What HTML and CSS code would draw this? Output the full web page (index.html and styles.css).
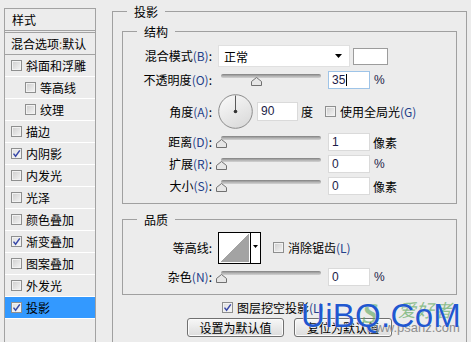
FILE: index.html
```html
<!DOCTYPE html>
<html lang="zh-CN">
<head>
<meta charset="utf-8">
<title>图层样式 - 投影</title>
<link rel="stylesheet" href="styles.css">
</head>
<body>
<div class="app">
  <aside class="styles">
    <div class="styles-head">样式</div>
    <div class="blend">混合选项<span class="colon">:</span>默认</div>
    <ul class="list">
      <li class="item"><span class="cb"></span>斜面和浮雕</li>
      <li class="item sub"><span class="cb"></span>等高线</li>
      <li class="item sub"><span class="cb"></span>纹理</li>
      <li class="item"><span class="cb"></span>描边</li>
      <li class="item"><span class="cb on"><svg viewBox="0 0 9 9" width="9" height="9"><path d="M1.5 4.6 L3.6 7.2 L7.8 1.4" fill="none" stroke="#3848a8" stroke-width="1.5"/></svg></span>内阴影</li>
      <li class="item"><span class="cb"></span>内发光</li>
      <li class="item"><span class="cb"></span>光泽</li>
      <li class="item"><span class="cb"></span>颜色叠加</li>
      <li class="item"><span class="cb on"><svg viewBox="0 0 9 9" width="9" height="9"><path d="M1.5 4.6 L3.6 7.2 L7.8 1.4" fill="none" stroke="#3848a8" stroke-width="1.5"/></svg></span>渐变叠加</li>
      <li class="item"><span class="cb"></span>图案叠加</li>
      <li class="item"><span class="cb"></span>外发光</li>
      <li class="item sel"><span class="cb on"><svg viewBox="0 0 9 9" width="9" height="9"><path d="M1.5 4.6 L3.6 7.2 L7.8 1.4" fill="none" stroke="#3848a8" stroke-width="1.5"/></svg></span>投影</li>
    </ul>
  </aside>

  <fieldset class="group outer">
    <legend>投影</legend>

    <fieldset class="group inner struct">
      <legend>结构</legend>

      <div class="row r1">
        <span class="lbl">混合模式<span class="k">(B)</span>:</span>
        <div class="ctl">
          <div class="select">正常<svg class="arrow" viewBox="0 0 7 4" width="7" height="4"><path d="M0 0 H7 L3.5 4 Z" fill="#000"/></svg></div>
          <div class="swatch"></div>
        </div>
      </div>

      <div class="row r2">
        <span class="lbl">不透明度<span class="k">(O)</span>:</span>
        <div class="ctl">
          <div class="slider"><div class="track"></div><svg class="thumb" style="left:35%" viewBox="0 0 11 9" width="11" height="9"><path d="M5.5 0.5 L10.5 4.5 V8.5 H0.5 V4.5 Z" fill="#e6e6e6" stroke="#707070"/></svg></div>
          <div class="num focus">35<span class="caret"></span></div>
          <span class="unit pct">%</span>
        </div>
      </div>

      <div class="row r3">
        <span class="lbl">角度<span class="k">(A)</span>:</span>
        <div class="ctl">
          <svg class="dial" viewBox="0 0 35 35" width="35" height="35">
            <defs><linearGradient id="dg" x1="0" y1="0" x2="0.6" y2="1"><stop offset="0" stop-color="#fbfbfb"/><stop offset="1" stop-color="#dcdcdc"/></linearGradient></defs>
            <circle cx="17.5" cy="17.5" r="16.8" fill="url(#dg)" stroke="#8c8c8c"/>
            <line x1="17.5" y1="1.5" x2="17.5" y2="17.5" stroke="#5a5a5a" stroke-width="1"/>
            <circle cx="17.5" cy="17.5" r="1.8" fill="#333"/>
          </svg>
          <div class="num angle">90</div>
          <span class="unit deg">度</span>
          <span class="cb gl"></span>
          <span class="cbtext">使用全局光<span class="k">(G)</span></span>
        </div>
      </div>

      <div class="row r4">
        <span class="lbl">距离<span class="k">(D)</span>:</span>
        <div class="ctl">
          <div class="slider"><div class="track"></div><svg class="thumb" style="left:0.4%" viewBox="0 0 11 9" width="11" height="9"><path d="M5.5 0.5 L10.5 4.5 V8.5 H0.5 V4.5 Z" fill="#e6e6e6" stroke="#707070"/></svg></div>
          <div class="num">1</div>
          <span class="unit">像素</span>
        </div>
      </div>

      <div class="row r4">
        <span class="lbl">扩展<span class="k">(R)</span>:</span>
        <div class="ctl">
          <div class="slider"><div class="track"></div><svg class="thumb" style="left:0%" viewBox="0 0 11 9" width="11" height="9"><path d="M5.5 0.5 L10.5 4.5 V8.5 H0.5 V4.5 Z" fill="#e6e6e6" stroke="#707070"/></svg></div>
          <div class="num">0</div>
          <span class="unit pct">%</span>
        </div>
      </div>

      <div class="row r4">
        <span class="lbl">大小<span class="k">(S)</span>:</span>
        <div class="ctl">
          <div class="slider"><div class="track"></div><svg class="thumb" style="left:0%" viewBox="0 0 11 9" width="11" height="9"><path d="M5.5 0.5 L10.5 4.5 V8.5 H0.5 V4.5 Z" fill="#e6e6e6" stroke="#707070"/></svg></div>
          <div class="num">0</div>
          <span class="unit">像素</span>
        </div>
      </div>
    </fieldset>

    <fieldset class="group inner quality">
      <legend>品质</legend>

      <div class="row q1">
        <span class="lbl">等高线:</span>
        <div class="ctl">
          <div class="contour">
            <div class="curve"></div>
            <div class="drop"><svg viewBox="0 0 5 3" width="5" height="3"><path d="M0 0 H5 L2.5 3 Z" fill="#000"/></svg></div>
          </div>
          <span class="cb aa"></span>
          <span class="cbtext">消除锯齿<span class="k">(L)</span></span>
        </div>
      </div>

      <div class="row q2">
        <span class="lbl">杂色<span class="k">(N)</span>:</span>
        <div class="ctl">
          <div class="slider"><div class="track"></div><svg class="thumb" style="left:0%" viewBox="0 0 11 9" width="11" height="9"><path d="M5.5 0.5 L10.5 4.5 V8.5 H0.5 V4.5 Z" fill="#e6e6e6" stroke="#707070"/></svg></div>
          <div class="num">0</div>
          <span class="unit pct">%</span>
        </div>
      </div>
    </fieldset>

    <div class="knock">
      <span class="cb on"><svg viewBox="0 0 9 9" width="9" height="9"><path d="M1.5 4.6 L3.6 7.2 L7.8 1.4" fill="none" stroke="#3848a8" stroke-width="1.5"/></svg></span>
      <span class="cbtext">图层挖空投影<span class="k">(L)</span></span>
    </div>

    <div class="buttons">
      <button class="btn b1">设置为默认值</button>
      <button class="btn b2">复位为默认值</button>
    </div>
  </fieldset>

  <div class="wm-green">爱好者</div>
  <div class="wm-s">S</div>
  <div class="wm-url">www.psahz.com</div>
  <div class="wm-blue">UiBQ.CoM</div>
</div>
</body>
</html>
```

FILE: styles.css
```css
html, body {
  margin: 0;
  padding: 0;
}

body {
  width: 471px;
  height: 342px;
  overflow: hidden;
  background: #ececec;
  font-family: "Noto Sans CJK SC", "Noto Sans", sans-serif;
  font-size: 12px;
  color: #000;
}

.app {
  position: relative;
  display: flex;
  align-items: flex-start;
  height: 342px;
}

/* ---------- left list ---------- */
.styles {
  flex: none;
  box-sizing: border-box;
  width: 92px;
  height: 380px;
  margin: 8px 0 0 4px;
  border: 1px solid #a2a2a2;
}

.styles-head {
  height: 21px;
  line-height: 21px;
  padding-left: 7px;
  border-bottom: 3px double #a2a2a2;
}

.blend {
  height: 21px;
  line-height: 21px;
  padding-left: 6px;
  border-bottom: 1px solid #a2a2a2;
  white-space: nowrap;
}

.colon {
  color: #9a6a20;
}

.list {
  list-style: none;
  margin: 0;
  padding: 0;
}

.item {
  display: flex;
  align-items: center;
  gap: 4px;
  height: 21px;
  padding-left: 6px;
  border-bottom: 1px solid #fff;
  white-space: nowrap;
}

.item.sub {
  padding-left: 20px;
}

.item.sel {
  background: #3399ff;
}

/* checkbox */
.cb {
  flex: none;
  display: inline-flex;
  align-items: center;
  justify-content: center;
  box-sizing: border-box;
  width: 11px;
  height: 11px;
  border: 1px solid #8e8f8f;
  background: linear-gradient(135deg, #cdcdcd, #f5f5f5);
  box-shadow: inset 0 0 0 1px #f2f2f2;
}

.cb.on {
  background: linear-gradient(135deg, #dedede, #fafafa);
}

.cb svg {
  display: block;
}

.cbtext {
  white-space: nowrap;
}

.k {
  color: #23408a;
}

/* ---------- right groups ---------- */
fieldset.group {
  margin: 0;
  border: 1px solid #a0a0a0;
  min-width: 0;
}

fieldset.group > legend {
  height: 17px;
  line-height: 17px;
  padding: 0 7px;
}

.outer {
  flex: none;
  box-sizing: border-box;
  width: 355px;
  height: 400px;
  margin: 3px 0 0 16px !important;
  padding: 3px 9px 0;
}

.outer > legend {
  margin-left: 5px;
}

.inner {
  box-sizing: border-box;
  width: 335px;
  padding: 5px 0 6px;
}

.inner > legend {
  margin-left: 14px;
}

.quality {
  margin-top: 7px !important;
  padding: 3px 0 6px;
}

.row {
  display: grid;
  grid-template-columns: 89px auto;
  column-gap: 6px;
  align-items: center;
}

.r1 { height: 22px; }
.r2 { height: 25px; }
.r3 { height: 39px; }
.r4 { height: 22px; }
.q1 { height: 33px; }
.q2 { height: 22px; margin-top: 2px; }

.lbl {
  text-align: right;
  white-space: nowrap;
  line-height: 16px;
}

.ctl {
  display: flex;
  align-items: center;
  white-space: nowrap;
}

/* dropdown */
.select {
  box-sizing: border-box;
  display: flex;
  align-items: center;
  width: 132px;
  height: 22px;
  padding: 0 7px 0 5px;
  background: #fff;
  border: 1px solid #e0e0e0;
}

.select .arrow {
  margin-left: auto;
}

.swatch {
  box-sizing: border-box;
  width: 35px;
  height: 17px;
  margin-left: 3px;
  background: #fff;
  border: 1px solid #9c9c9c;
}

/* slider */
.slider {
  position: relative;
  flex: none;
  width: 100px;
  height: 12px;
  margin-left: 3px;
}

.track {
  height: 4px;
  border-radius: 2px;
  background: linear-gradient(#808080, #b4b4b4 55%, #d2d2d2);
}

.thumb {
  position: absolute;
  top: 3px;
  margin-left: -5.5px;
  display: block;
}

/* numeric fields */
.num {
  position: relative;
  box-sizing: border-box;
  width: 42px;
  height: 18px;
  margin-left: 7px;
  padding-left: 3px;
  background: #fff;
  border: 1px solid #dadada;
  font-family: "Liberation Sans", sans-serif;
  font-size: 12px;
  line-height: 16px;
  color: #1c1c48;
}

.num.focus {
  border-color: #9ec4e8;
}

.caret {
  display: inline-block;
  width: 1px;
  height: 12px;
  margin-left: 1px;
  vertical-align: -2px;
  background: #000;
}

.num.angle {
  width: 41px;
  height: 19px;
  margin-left: 4px;
  line-height: 17px;
}

.unit {
  margin-left: 3px;
}

.unit.pct {
  margin-left: 4px;
  color: #1c1c48;
  font-family: "Liberation Sans", sans-serif;
}

.dial {
  display: block;
  flex: none;
}

.cb.gl {
  margin-left: 12px;
  margin-right: 4px;
}

/* contour picker */
.contour {
  box-sizing: border-box;
  display: flex;
  width: 43px;
  height: 32px;
  background: #fff;
  border: 1px solid #000;
}

.curve {
  box-sizing: border-box;
  width: 32px;
  padding: 1px 1px 1px 1px;
  border-right: 1px solid #000;
  background: linear-gradient(to bottom right, #fff 50%, #a3a3a3 50%) content-box;
}

.drop {
  flex: 1;
  display: flex;
  align-items: center;
  justify-content: center;
  padding-bottom: 2px;
}

.drop svg {
  display: block;
}

.cb.aa {
  margin-left: 12px;
  margin-right: 4px;
}

/* bottom */
.knock {
  display: flex;
  align-items: center;
  gap: 4px;
  height: 20px;
  margin: 2px 0 0 100px;
}

.buttons {
  display: flex;
  gap: 10px;
  margin: 1px 0 0 65px;
}

.btn {
  box-sizing: border-box;
  height: 19px;
  padding: 0;
  border: 1px solid #707070;
  border-radius: 3px;
  background: linear-gradient(#f7f7f7, #dcdcdc);
  box-shadow: inset 0 0 0 1px #fbfbfb;
  font-family: "Noto Sans CJK SC", "Noto Sans", sans-serif;
  font-size: 12px;
  line-height: 17px;
  color: #000;
}

.b1 { width: 97px; }
.b2 { width: 98px; }

/* watermark overlay */
.wm-blue {
  position: absolute;
  left: 301px;
  top: 299px;
  font-family: "Liberation Sans", sans-serif;
  font-size: 33px;
  line-height: 33px;
  color: #2157cf;
  letter-spacing: 0.3px;
  text-shadow: 0 0 1px #fff;
}

.wm-url {
  position: absolute;
  left: 366px;
  top: 320px;
  font-family: "Liberation Sans", sans-serif;
  font-size: 13px;
  line-height: 15px;
  color: #8e8e8e;
}

.wm-green {
  position: absolute;
  left: 398px;
  top: 298px;
  font-size: 18px;
  line-height: 22px;
  font-style: italic;
  color: #6fb06f;
  opacity: 0.75;
}

.wm-s {
  position: absolute;
  left: 362px;
  top: 298px;
  font-family: "Liberation Serif", serif;
  font-size: 30px;
  line-height: 30px;
  font-style: italic;
  font-weight: bold;
  color: #5aa65a;
  opacity: 0.6;
}
```
